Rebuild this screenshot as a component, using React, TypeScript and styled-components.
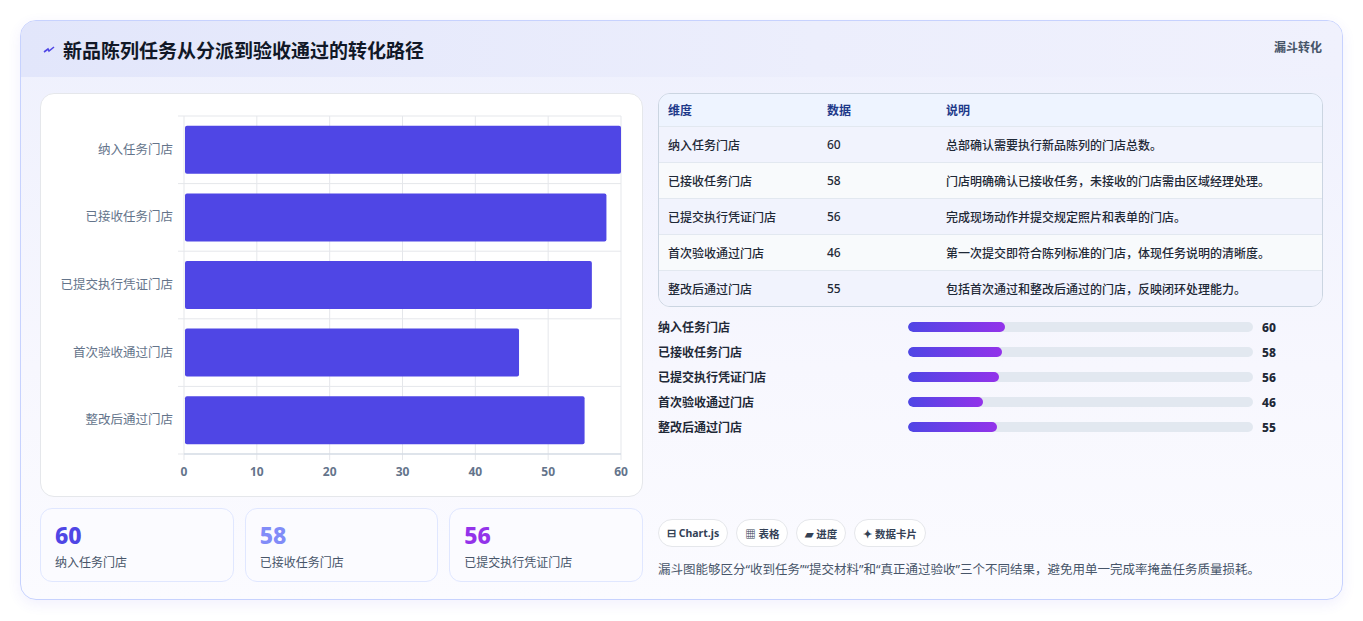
import styled, { createGlobalStyle } from "styled-components";

const Global = createGlobalStyle`
  body { margin: 0; background: #f3f4f6; font-family: "Noto Sans", "Noto Sans CJK SC", sans-serif; }
`;

const stages = [
  { name: "纳入任务门店", value: 60, note: "总部确认需要执行新品陈列的门店总数。" },
  { name: "已接收任务门店", value: 58, note: "门店明确确认已接收任务，未接收的门店需由区域经理处理。" },
  { name: "已提交执行凭证门店", value: 56, note: "完成现场动作并提交规定照片和表单的门店。" },
  { name: "首次验收通过门店", value: 46, note: "第一次提交即符合陈列标准的门店，体现任务说明的清晰度。" },
  { name: "整改后通过门店", value: 55, note: "包括首次通过和整改后通过的门店，反映闭环处理能力。" },
];

const Page = styled.div`
  padding: 20px 20px 21px 20px;
  background: #fff;
  height: 621px;
  box-sizing: border-box;
`;

const Card = styled.div`
  height: 580px;
  box-sizing: border-box;
  border: 1px solid #c7d2fe;
  border-radius: 16px;
  overflow: hidden;
  background: linear-gradient(180deg, #eef0fd 0%, #f7f7fe 60%, #fbfbff 100%);
  box-shadow: 0 4px 14px rgba(79, 70, 229, 0.08);
  display: flex;
  flex-direction: column;
`;

const Header = styled.div`
  height: 56px;
  flex: none;
  display: flex;
  align-items: flex-start;
  justify-content: space-between;
  padding: 0 20px 0 22px;
  background: linear-gradient(90deg, #e2e6fb, #eceefc 60%, #f0f1fd);
`;

const Title = styled.h1`
  margin: 15px 0 0;
  font-size: 19px;
  font-weight: 700;
  color: #111827;
  display: flex;
  align-items: center;
  gap: 8px;
`;

const Tag = styled.span`
  margin-top: 17px;
  font-size: 12px;
  font-weight: 700;
  color: #475569;
`;

const Body = styled.div`
  flex: 1;
  display: grid;
  grid-template-columns: 603px 1fr;
  gap: 15px;
  padding: 16px 19px 18px 19px;
`;

const LeftCol = styled.div`
  display: flex;
  flex-direction: column;
  gap: 11px;
`;

const ChartBox = styled.div`
  height: 404px;
  box-sizing: border-box;
  background: #fff;
  border: 1px solid #e5e7eb;
  border-radius: 14px;
`;

const Kpis = styled.div`
  display: grid;
  grid-template-columns: repeat(3, 1fr);
  gap: 11px;
`;

const Kpi = styled.div`
  height: 74px;
  box-sizing: border-box;
  border: 1px solid #e0e7ff;
  border-radius: 12px;
  background: #fbfbff;
  padding: 10px 14px;
`;

const KpiNum = styled.div<{ $color: string }>`
  font-size: 23px;
  font-weight: 800;
  line-height: 32px;
  color: ${(p) => p.$color};
`;

const KpiLabel = styled.div`
  font-size: 12px;
  color: #475569;
  margin-top: 2px;
`;

const RightCol = styled.div`
  display: flex;
  flex-direction: column;
`;

const Table = styled.div`
  border: 1px solid #cbd5e1;
  border-radius: 12px;
  overflow: hidden;
  margin-right: 0;
`;

const Row = styled.div<{ $head?: boolean; $alt?: boolean }>`
  display: grid;
  grid-template-columns: 159px 119px 1fr;
  padding-left: 9px;
  height: ${(p) => (p.$head ? "32px" : "35px")};
  align-items: center;
  font-size: 12px;
  font-weight: ${(p) => (p.$head ? 700 : 500)};
  color: ${(p) => (p.$head ? "#1e3a8a" : "#1f2937")};
  background: ${(p) => (p.$head ? "#eef4ff" : p.$alt ? "#f8fafc" : "#f1f3fd")};
  border-top: ${(p) => (p.$head ? "none" : "1px solid #e2e8f0")};
`;

const Bars = styled.div`
  margin-top: 11px;
  display: flex;
  flex-direction: column;
  gap: 7px;
`;

const BarRow = styled.div`
  display: grid;
  grid-template-columns: 250px 345px 1fr;
  align-items: center;
  gap: 0;
  font-size: 12px;
  font-weight: 600;
  color: #1f2937;
  height: 18px;
`;

const Track = styled.div`
  height: 10px;
  border-radius: 5px;
  background: #e2e8f0;
  overflow: hidden;
`;

const Fill = styled.div`
  height: 100%;
  border-radius: 5px;
  background: linear-gradient(90deg, #4f46e5, #9333ea);
`;

const BarVal = styled.span`
  padding-left: 9px;
  font-weight: 800;
`;

const Chips = styled.div`
  margin-top: auto;
  display: flex;
  gap: 8px;
`;

const Chip = styled.span`
  height: 28px;
  box-sizing: border-box;
  padding: 0 8px;
  display: flex;
  align-items: center;
  gap: 3px;
  border: 1px solid #e5e7eb;
  border-radius: 14px;
  background: #fff;
  font-size: 10.5px;
  font-weight: 700;
  color: #334155;
`;

const Foot = styled.p`
  margin: 12px 0 4px;
  font-size: 12.5px;
  color: #475569;
`;

function FunnelChart() {
  const x0 = 143, x1 = 580, y0 = 22, y1 = 360;
  const band = (y1 - y0) / 5;
  const sx = (v: number) => x0 + ((x1 - x0) * v) / 60;
  return (
    <svg width="601" height="402" style={{ display: "block" }}>
      {[0, 10, 20, 30, 40, 50, 60].map((t) => (
        <g key={t}>
          <line x1={sx(t)} x2={sx(t)} y1={y0} y2={y1 + 6} stroke="#e5e7eb" />
          <text x={sx(t)} y={y1 + 22} textAnchor="middle" fontSize="12" fontWeight="700" fill="#64748b">
            {t}
          </text>
        </g>
      ))}
      {[0, 1, 2, 3, 4, 5].map((i) => (
        <line key={i} x1={x0 - 6} x2={x1} y1={y0 + band * i} y2={y0 + band * i} stroke="#e5e7eb" />
      ))}
      <line x1={x0} x2={x1} y1={y1} y2={y1} stroke="#cbd5e1" />
      {stages.map((s, i) => {
        const cy = y0 + band * i + band / 2;
        return (
          <g key={s.name}>
            <text x={x0 - 11} y={cy + 4} textAnchor="end" fontSize="12.5" fill="#64748b">
              {s.name}
            </text>
            <rect x={x0 + 1} y={cy - 24} width={sx(s.value) - x0 - 1} height={48} rx="2" fill="#4f46e5" />
          </g>
        );
      })}
    </svg>
  );
}

export default function App() {
  const kpiColors = ["#4f46e5", "#818cf8", "#9333ea"];
  return (
    <Page>
      <Global />
      <Card>
        <Header>
          <Title>
            <svg width="12" height="10" viewBox="0 0 12 10">
              <path d="M1 7 L5 4 L6 6 L11 2" stroke="#4f46e5" strokeWidth="1.6" fill="none" />
            </svg>
            新品陈列任务从分派到验收通过的转化路径
          </Title>
          <Tag>漏斗转化</Tag>
        </Header>
        <Body>
          <LeftCol>
            <ChartBox>
              <FunnelChart />
            </ChartBox>
            <Kpis>
              {stages.slice(0, 3).map((s, i) => (
                <Kpi key={s.name}>
                  <KpiNum $color={kpiColors[i]}>{s.value}</KpiNum>
                  <KpiLabel>{s.name}</KpiLabel>
                </Kpi>
              ))}
            </Kpis>
          </LeftCol>
          <RightCol>
            <Table>
              <Row $head>
                <span>维度</span>
                <span>数据</span>
                <span>说明</span>
              </Row>
              {stages.map((s, i) => (
                <Row key={s.name} $alt={i % 2 === 1}>
                  <span>{s.name}</span>
                  <span>{s.value}</span>
                  <span>{s.note}</span>
                </Row>
              ))}
            </Table>
            <Bars>
              {stages.map((s) => (
                <BarRow key={s.name}>
                  <span>{s.name}</span>
                  <Track>
                    <Fill style={{ width: `${s.value * 0.47}%` }} />
                  </Track>
                  <BarVal>{s.value}</BarVal>
                </BarRow>
              ))}
            </Bars>
            <Chips>
              <Chip>⊟ Chart.js</Chip>
              <Chip>▦ 表格</Chip>
              <Chip>▰ 进度</Chip>
              <Chip>✦ 数据卡片</Chip>
            </Chips>
            <Foot>漏斗图能够区分“收到任务”“提交材料”和“真正通过验收”三个不同结果，避免用单一完成率掩盖任务质量损耗。</Foot>
          </RightCol>
        </Body>
      </Card>
    </Page>
  );
}
